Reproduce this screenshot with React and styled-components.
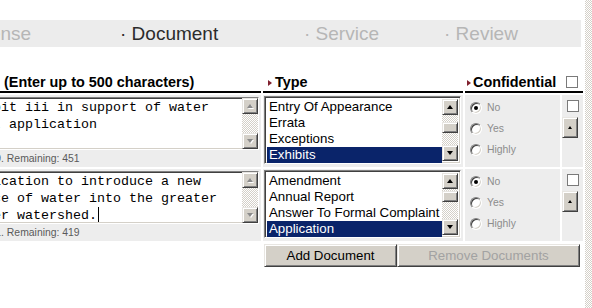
import React from 'react';
import styled, { createGlobalStyle, css } from 'styled-components';

const GlobalStyle = createGlobalStyle`
  html, body {
    margin: 0;
    padding: 0;
    background: #fff;
  }
  body {
    font-family: "Liberation Sans", Arial, sans-serif;
    overflow: hidden;
  }
`;

const checker = css`
  background: repeating-conic-gradient(#d4d0c8 0 25%, #ffffff 0 50%) 0 0 / 2px 2px;
`;

const bevelOut = css`
  background: #d4d0c8;
  border: 1px solid;
  border-color: #e8e6e2 #404040 #404040 #e8e6e2;
  box-shadow: inset 1px 1px 0 #fff, inset -1px -1px 0 #808080;
  box-sizing: border-box;
`;

const bevelIn = css`
  border: 1px solid;
  border-color: #808080 #fff #fff #808080;
  box-shadow: inset 1px 1px 0 #404040, inset -1px -1px 0 #d4d0c8;
  box-sizing: border-box;
`;

const Viewport = styled.div`
  display: flex;
  width: 592px;
  height: 308px;
  overflow: hidden;
`;

const Main = styled.div`
  flex: 0 0 585px;
  overflow: hidden;
`;

const PageTrack = styled.div`
  flex: 1;
  ${checker}
`;

const Content = styled.div`
  width: 629px;
  margin-left: -46px;
`;

const TabBar = styled.div`
  display: flex;
  align-items: center;
  width: 627px;
  height: 27px;
  margin-top: 20px;
  background: #ececec;
`;

const Tab = styled.div`
  flex: 0 0 ${p => p.$w}px;
  font-size: 19px;
  line-height: 22px;
  white-space: nowrap;
  color: ${p => (p.$active ? '#2b2b2b' : '#b6b6b6')};
`;

const Grid = styled.div`
  display: grid;
  grid-template-columns: 307px 200px 95px 21px;
  grid-template-rows: 24px 72px 72px auto;
  column-gap: 2px;
  row-gap: 2px;
  margin-top: 22px;
`;

const HeadCell = styled.div`
  display: flex;
  align-items: flex-end;
  justify-content: ${p => (p.$spread ? 'space-between' : 'flex-start')};
  grid-column: ${p => (p.$span ? `span ${p.$span}` : 'auto')};
  padding-left: ${p => p.$pad}px;
  border-bottom: 2px solid #000;
  font-size: 14.4px;
  font-weight: bold;
  line-height: 17px;
  color: #000;
  white-space: nowrap;
`;

const Marked = styled.span`
  display: flex;
  align-items: center;
  gap: ${p => p.$gap}px;
  &::before {
    content: '';
    border-top: 3.5px solid transparent;
    border-bottom: 3.5px solid transparent;
    border-left: 4px solid #80202e;
  }
`;

const Check = styled.span`
  display: block;
  width: 12px;
  height: 12px;
  box-sizing: border-box;
  border: 1px solid #7a7a7a;
  background: #fff;
  margin: ${p => p.$m};
`;

const Cell = styled.div`
  background: #ededed;
  display: flex;
  flex-direction: column;
  align-items: flex-start;
  padding: ${p => p.$pad};
  overflow: hidden;
`;

const TextBox = styled.div`
  ${bevelIn}
  display: flex;
  flex: 0 0 53px;
  width: 303px;
  height: 53px;
  background: #fff;
`;

const TextContent = styled.div`
  flex: 1;
  padding: 2px 2px 0 4px;
  font-family: "Liberation Mono", "Courier New", monospace;
  font-size: 13.33px;
  line-height: 16.5px;
  color: #000;
  white-space: pre-wrap;
  overflow: hidden;
`;

const Caret = styled.span`
  display: inline-block;
  width: 1px;
  height: 15px;
  margin-left: 1px;
  background: #000;
  vertical-align: -3px;
`;

const Remaining = styled.div`
  font-size: 10.4px;
  line-height: 18px;
  color: #5a5a5a;
  white-space: nowrap;
`;

const ScrollBar = styled.div`
  display: flex;
  flex-direction: column;
  flex: 0 0 16px;
`;

const ArrowBtn = styled.div`
  ${bevelOut}
  flex: 0 0 16px;
  display: flex;
  align-items: center;
  justify-content: center;
  &::after {
    content: '';
    border-left: 3.5px solid transparent;
    border-right: 3.5px solid transparent;
    ${p => (p.$dir === 'up' ? 'border-bottom' : 'border-top')}: 4px solid
      ${p => (p.$off ? '#8a8a8a' : '#000')};
    filter: ${p => (p.$off ? 'drop-shadow(1px 1px 0 #fff)' : 'none')};
  }
`;

const Track = styled.div`
  flex: 1;
  ${checker}
  display: flex;
  flex-direction: column;
`;

const Thumb = styled.div`
  ${bevelOut}
  flex: 0 0 11px;
`;

const ListBox = styled.div`
  ${bevelIn}
  display: flex;
  flex: 0 0 68px;
  width: 197px;
  height: 68px;
  padding: 2px;
  margin-left: 1px;
  background: #fff;
`;

const Options = styled.div`
  flex: 1;
  display: flex;
  flex-direction: column;
`;

const Option = styled.div`
  height: 16px;
  line-height: 16px;
  padding-left: 2px;
  font-size: 13.3px;
  white-space: nowrap;
  color: ${p => (p.$sel ? '#fff' : '#000')};
  background: ${p => (p.$sel ? '#0a246a' : 'transparent')};
`;

const RadioLine = styled.div`
  display: flex;
  align-items: center;
  gap: 5px;
  height: 21px;
  font-size: 10.4px;
  color: #8c8c8c;
`;

const Radio = styled.span`
  ${bevelIn}
  width: 12px;
  height: 12px;
  border-radius: 50%;
  background: #fff;
  display: flex;
  align-items: center;
  justify-content: center;
  &::after {
    content: '';
    width: 4px;
    height: 4px;
    border-radius: 50%;
    background: ${p => (p.$on ? '#000' : 'transparent')};
  }
`;

const MiniBtn = styled.div`
  ${bevelOut}
  width: 16px;
  height: 21px;
  margin-top: 5px;
  display: flex;
  align-items: center;
  justify-content: center;
  &::after {
    content: '';
    border-left: 2.5px solid transparent;
    border-right: 2.5px solid transparent;
    border-bottom: 3px solid #000;
  }
`;

const ButtonRow = styled.div`
  grid-column: 2 / span 3;
  display: flex;
  margin: 1px 3px 0 1px;
`;

const ActionButton = styled.button`
  ${bevelOut}
  flex: ${p => (p.$w ? `0 0 ${p.$w}px` : '1')};
  height: 23px;
  padding: 0;
  font-family: "Liberation Sans", Arial, sans-serif;
  font-size: 13.3px;
  color: ${p => (p.disabled ? '#a2a2a2' : '#000')};
`;

const tabs = [
  { label: '· License', w: 166 },
  { label: '· Document', w: 184, active: true },
  { label: '· Service', w: 140 },
  { label: '· Review', w: 137 },
];

const documents = [
  {
    text: 'Exhibit iii in support of water right application',
    types: ['Entry Of Appearance', 'Errata', 'Exceptions', 'Exhibits'],
    selected: 3,
    thumb: 7,
  },
  {
    text: 'Application to introduce a new source of water into the greater Denver watershed.',
    types: ['Amendment', 'Annual Report', 'Answer To Formal Complaint', 'Application'],
    selected: 3,
    thumb: 2,
    caret: true,
  },
];

const Scroller = ({ off, thumb }) => (
  <ScrollBar>
    <ArrowBtn $dir="up" $off={off} />
    <Track>{thumb !== undefined && <Thumb style={{ marginTop: thumb }} />}</Track>
    <ArrowBtn $dir="down" $off={off} />
  </ScrollBar>
);

const DocumentRow = ({ doc }) => (
  <>
    <Cell $pad="2px 2px 0 2px">
      <TextBox>
        <TextContent>
          {doc.text}
          {doc.caret && <Caret />}
        </TextContent>
        <Scroller off />
      </TextBox>
      <Remaining>
        Count: {doc.text.length}. Remaining: {500 - doc.text.length}
      </Remaining>
    </Cell>
    <Cell $pad="1px 0 0 0">
      <ListBox>
        <Options>
          {doc.types.map((t, i) => (
            <Option key={t} $sel={i === doc.selected}>
              {t}
            </Option>
          ))}
        </Options>
        <Scroller thumb={doc.thumb} />
      </ListBox>
    </Cell>
    <Cell $pad="2px 0 0 5px">
      <RadioLine>
        <Radio $on />
        No
      </RadioLine>
      <RadioLine>
        <Radio />
        Yes
      </RadioLine>
      <RadioLine>
        <Radio />
        Highly
      </RadioLine>
    </Cell>
    <Cell $pad="5px 0 0 0">
      <Check $m="0 0 0 5px" />
      <MiniBtn />
    </Cell>
  </>
);

export default function App() {
  return (
    <Viewport>
      <GlobalStyle />
      <Main>
        <Content>
          <TabBar>
            {tabs.map(t => (
              <Tab key={t.label} $w={t.w} $active={t.active}>
                {t.label}
              </Tab>
            ))}
          </TabBar>
          <Grid>
            <HeadCell $pad={50}>(Enter up to 500 characters)</HeadCell>
            <HeadCell $pad={5}>
              <Marked $gap={3}>Type</Marked>
            </HeadCell>
            <HeadCell $pad={2} $span={2} $spread>
              <Marked $gap={2}>Confidential</Marked>
              <Check $m="0 5px 3px 0" />
            </HeadCell>
            {documents.map((d, i) => (
              <DocumentRow key={i} doc={d} />
            ))}
            <ButtonRow>
              <ActionButton $w={133}>Add Document</ActionButton>
              <ActionButton disabled>Remove Documents</ActionButton>
            </ButtonRow>
          </Grid>
        </Content>
      </Main>
      <PageTrack />
    </Viewport>
  );
}
